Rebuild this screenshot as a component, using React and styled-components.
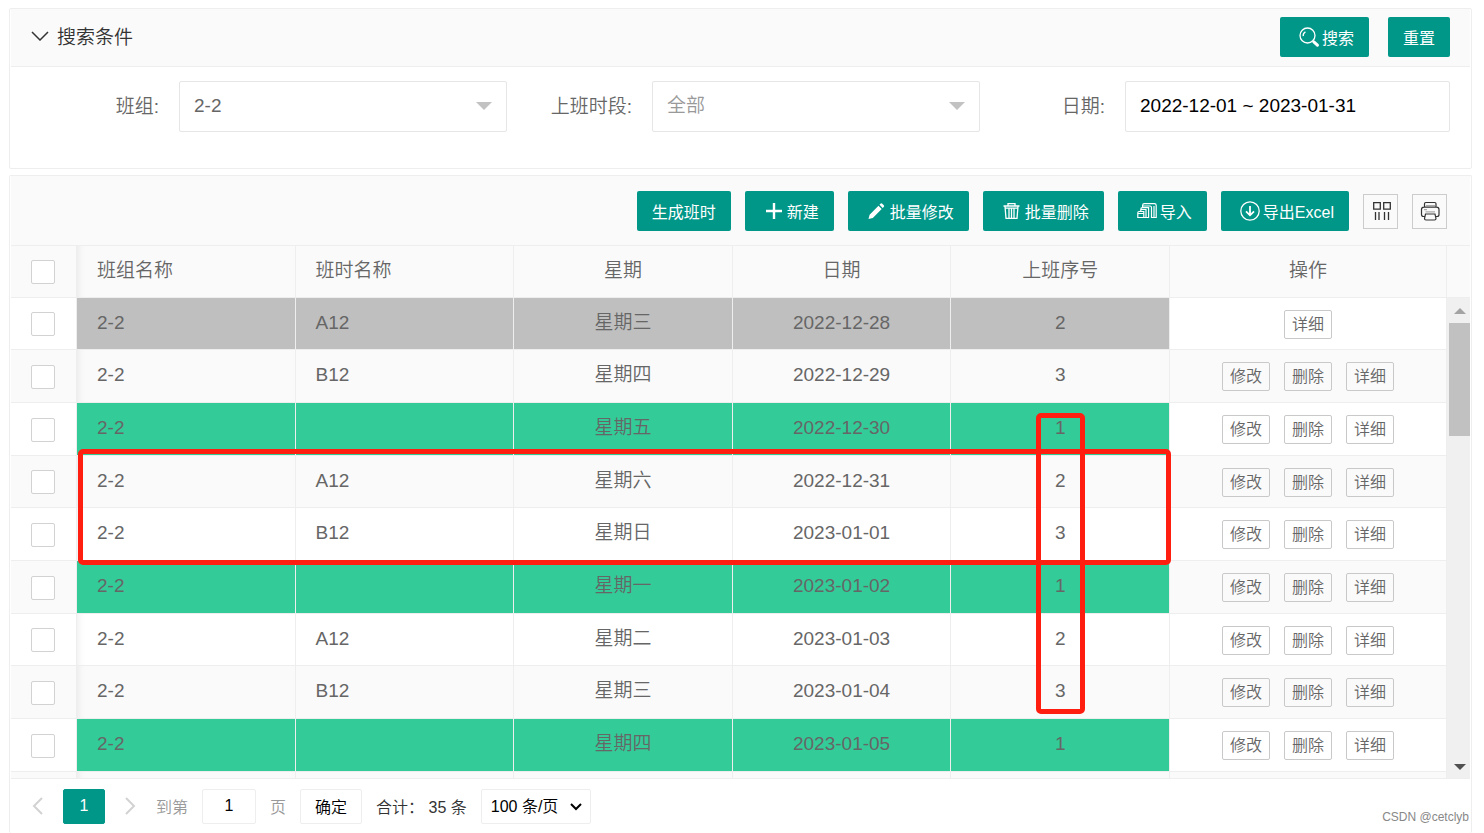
import React, {useState} from "react";
import styled, {createGlobalStyle, css} from "styled-components";

const colors = {
    primary: "#009688",
    border: "#eeeeee",
    inputBorder: "#e6e6e6",
    controlBorder: "#d2d2d2",
    panel: "#fafafa",
    text: "#666666",
    textDark: "#333333",
    textMuted: "#999999",
    past: "#bfbfbf",
    rest: "#33cc99",
    mark: "#ff1e10"
};

const GlobalStyle = createGlobalStyle`
    * {
        box-sizing: border-box;
    }

    body {
        margin: 0;

        background-color: #ffffff;
        color: ${colors.text};

        font-family: "Liberation Sans", "Noto Sans CJK SC", sans-serif;
        font-size: 19px;
        font-weight: 350;
    }

    button, input, select {
        margin: 0;

        font: inherit;
    }

    button {
        cursor: pointer;
    }
`;

const Page = styled.main`
    display: flex;
    flex-direction: column;
    gap: 6px;

    padding: 8px 12px 0 9px;

    min-height: 100vh;
    overflow: hidden;
`;

const Panel = styled.section`
    padding: 0 1px;

    border: 1px solid ${colors.border};
    border-radius: 2px;
`;

const ListPanel = styled(Panel)`
    display: flex;
    flex: 1;
    flex-direction: column;

    border-bottom: 0;
`;

const SearchHeader = styled.header`
    display: flex;
    align-items: center;
    justify-content: space-between;

    padding: 0 20px 2px;

    height: 58px;

    border-bottom: 1px solid ${colors.border};
    background-color: ${colors.panel};
`;

const Title = styled.h2`
    display: flex;
    align-items: center;
    gap: 8px;

    margin: 0 0 2px;

    color: ${colors.textDark};

    font-size: 19px;
    font-weight: 350;
`;

const ButtonGroup = styled.div`
    display: flex;
    align-items: center;
    gap: ${({gap}) => gap}px;
`;

const ActionButton = styled.button`
    display: flex;
    align-items: center;

    padding: 0 15px;

    height: 40px;

    border: 0;
    border-radius: 2px;

    background-color: ${colors.primary};
    color: #ffffff;

    font-size: 16px;
    font-weight: 400;
    white-space: nowrap;

    svg {
        margin: 0 3px 0 4px;
    }
`;

const SearchForm = styled.form`
    display: grid;
    grid-template-columns: 1fr 1fr 470px;

    padding: 14px 20px 36px 23px;
`;

const Field = styled.div`
    display: flex;
    align-items: center;
    gap: 20px;
`;

const FieldLabel = styled.label`
    flex: 0 0 125px;

    padding-bottom: 4px;

    text-align: right;
`;

const fieldBox = css`
    padding: 0 14px 2px;

    width: 100%;
    height: 51px;

    border: 1px solid ${colors.inputBorder};
    border-radius: 2px;
    outline: 0;

    background-color: #ffffff;
`;

const SelectWrapper = styled.div`
    position: relative;

    flex: 1;

    &::after {
        content: "";

        position: absolute;
        top: 21px;
        right: 15px;

        border: 8px solid transparent;
        border-top-color: #c2c2c2;
        border-bottom-width: 0;

        pointer-events: none;
    }
`;

const Select = styled.select`
    ${fieldBox}

    appearance: none;

    color: ${({isEmpty}) => (isEmpty ? colors.textMuted : colors.text)};
`;

const DateInput = styled.input`
    ${fieldBox}

    flex: 1;

    min-width: 0;

    color: #000000;
`;

const Toolbar = styled.div`
    display: flex;
    justify-content: flex-end;

    padding: 15px 23px 14px;

    border-bottom: 1px solid ${colors.border};
    background-color: ${colors.panel};
`;

const ToolButton = styled.button`
    display: flex;
    align-items: center;
    justify-content: center;

    padding: 0;

    width: 35px;
    height: 35px;

    border: 1px solid #cccccc;

    background-color: transparent;
    color: ${colors.textDark};
`;

const TableView = styled.div`
    display: flex;

    height: calc(100vh - 300px);
    overflow: hidden;

    border-bottom: 1px solid ${colors.border};
`;

const TableArea = styled.div`
    position: relative;

    flex: 1;
`;

const Table = styled.table`
    width: 100%;

    border-spacing: 0;
    table-layout: fixed;
`;

const Column = styled.col`
    width: ${({width}) => width};
`;

const Row = styled.tr`
    height: 53px;

    background-color: #ffffff;

    &:nth-child(even) {
        background-color: ${colors.panel};
    }

    &:nth-child(3n + 1) {
        height: 52px;
    }
`;

const HeaderRow = styled.tr`
    height: 52px;

    background-color: ${colors.panel};
`;

const rowColors = {
    past: colors.past,
    rest: colors.rest
};

const Cell = styled.td`
    padding: 0 20px 2px;

    border-right: 1px solid ${colors.border};
    border-bottom: 1px solid ${colors.border};

    background-color: ${({status}) => rowColors[status] || "transparent"};
    box-shadow: ${({isFirst, status}) => (isFirst && !status
        ? "inset 8px 0 8px -8px rgba(0, 0, 0, 0.1)"
        : "none")};

    font-weight: inherit;
    line-height: 22px;
    text-align: ${({align = "left"}) => align};
`;

const ControlCell = styled(Cell)`
    padding: 1px 20px 0;
`;

const Checkbox = styled.input`
    display: block;

    width: 24px;
    height: 24px;

    appearance: none;

    border: 1px solid ${colors.controlBorder};
    border-radius: 2px;

    background-color: ${({checked}) => (checked ? colors.primary : "#ffffff")};
`;

const RowActions = styled.div`
    display: flex;
    justify-content: center;
    gap: 14px;
`;

const RowButton = styled.button`
    padding: 0;

    width: 48px;
    height: 29px;

    border: 1px solid #c9c9c9;
    border-radius: 2px;

    background-color: transparent;
    color: ${colors.text};

    font-size: 16px;
    line-height: 27px;
`;

const Mark = styled.div`
    position: absolute;

    border: 5px solid ${colors.mark};
    border-radius: 5px;

    pointer-events: none;
`;

const RowsMark = styled(Mark)`
    top: 203px;
    right: 276px;
    left: 67px;

    height: 116px;
`;

const OrderMark = styled(Mark)`
    top: 167px;
    right: calc(277px + (100% - 343px) / 10 - 24px);

    width: 49px;
    height: 301px;
`;

const ScrollSide = styled.div`
    display: flex;
    flex: 0 0 23px;
    flex-direction: column;
`;

const ScrollHeader = styled.div`
    height: 52px;

    border-bottom: 1px solid ${colors.border};
    background-color: ${colors.panel};
`;

const ScrollTrack = styled.div`
    display: flex;
    flex: 1;
    flex-direction: column;
    align-items: center;

    padding: 10px 0 8px 2px;

    background-color: #f0f0f0;
`;

const ScrollArrow = styled.span`
    border: 6px solid transparent;
    border-top: ${({isDown}) => (isDown ? "6px solid #505050" : "0")};
    border-bottom: ${({isDown}) => (isDown ? "0" : "6px solid #a3a3a3")};
`;

const ScrollThumb = styled.div`
    margin: 9px 0 auto;

    width: 100%;
    height: 113px;

    background-color: #c1c1c1;
`;

const Footer = styled.footer`
    display: flex;
    flex: 1;
    align-items: center;
    gap: 14px;

    padding: 0 1px 0 20px;

    color: ${colors.textMuted};

    font-size: 16px;
    white-space: nowrap;
`;

const Pager = styled.nav`
    display: flex;
    align-items: center;
    gap: 18px;
`;

const PageArrow = styled.button`
    display: flex;

    padding: 0;

    border: 0;

    background-color: transparent;
    color: ${colors.controlBorder};
`;

const pagerBox = css`
    padding: 0;

    height: 35px;

    border: 1px solid ${colors.border};
    border-radius: 2px;

    background-color: #ffffff;
    color: #000000;
`;

const CurrentPage = styled.button`
    ${pagerBox}

    width: 42px;

    border-color: ${colors.primary};

    background-color: ${colors.primary};
    color: #ffffff;
`;

const PageJump = styled.label`
    display: flex;
    align-items: center;
    gap: 14px;

    margin-left: 5px;
`;

const PageInput = styled.input`
    ${pagerBox}

    width: 54px;

    text-align: center;
`;

const ConfirmButton = styled.button`
    ${pagerBox}

    width: 62px;
`;

const Total = styled.span`
    color: ${colors.textDark};
`;

const PageSize = styled.div`
    position: relative;

    color: #000000;

    svg {
        position: absolute;
        top: 13px;
        right: 8px;

        pointer-events: none;
    }
`;

const PageSizeSelect = styled.select`
    ${pagerBox}

    padding: 0 9px;

    width: 110px;

    appearance: none;
`;

const Watermark = styled.small`
    align-self: flex-end;

    margin: 0 0 9px auto;

    color: #888888;

    font-size: 12px;
    line-height: 14px;
`;

function Icon({children, size = 20, stroke = 1.3}) {
    return (
        <svg
            width={size}
            height={size}
            viewBox={`0 0 ${size} ${size}`}
            fill="none"
            stroke="currentColor"
            strokeWidth={stroke}
            aria-hidden="true">
            {children}
        </svg>);
}

function Chevron({width, height, points, stroke = 1.5}) {
    return (
        <svg width={width} height={height} fill="none" stroke="currentColor" strokeWidth={stroke} aria-hidden="true">
            <polyline points={points} />
        </svg>);
}

const SearchIcon = () => (
    <Icon>
        <circle cx="8.5" cy="8.5" r="7.5" />
        <path d="M4.2 9.1a4.4 4.4 0 0 1 2.2-4.2" />
        <path d="M14.8 14.8l3.6 3.4" strokeWidth="3" strokeLinecap="round" />
    </Icon>);

const AddIcon = () => (
    <Icon stroke={2.4}>
        <path d="M10 2v16M2 10h16" />
    </Icon>);

const EditIcon = () => (
    <Icon>
        <path d="M1.500 18l1.100-4.300L11.500 4.800l3.200 3.200-8.900 8.900zM12.500 3.800l1.200-1.200q.8-.6 1.600.1l1.500 1.500q.7.8.1 1.600l-1.200 1.200z" fill="currentColor" stroke="none" />
    </Icon>);

const DeleteIcon = () => (
    <Icon>
        <path d="M1.500 5h16M6 4.600V2.600h7v2M3 7.200h13M3 5.200l1 12.200h11l1-12.200M7 7.500v9.500M9.500 7.500v9.500M12 7.500v9.500" />
    </Icon>);

const ImportIcon = () => (
    <Icon stroke={1.200}>
        <path d="M.8 16.500v-4.700q0-1.300 1.300-1.300h4.700v6zM3.800 10.500V8.500q0-1.800 1.800-1.800h6v9.800H6.800M.8 12.500h6M3.800 8.500h5.200v8M5.600 6.700V4.500q0-1.800 1.800-1.800h10q1.800 0 1.800 1.800v12h-4.700V6.500q0-1.500-1.500-1.500H6M17 5v11.500" />
    </Icon>);

const ExportIcon = () => (
    <Icon>
        <circle cx="10" cy="10" r="9.200" />
        <path d="M10 5v9M6 10.300l4 4 4-4" strokeWidth="1.800" />
    </Icon>);

const ColumnsIcon = () => (
    <Icon stroke={1.300}>
        <path d="M2.700 1.600h6.600v6.600h-6.600zM12.700 1.600h6.600v6.600h-6.600zM4.500 11v8M8 11v8M13.500 11v8M17.500 11v8" />
    </Icon>);

const PrintIcon = () => (
    <Icon stroke={1.200}>
        <path d="M4.500 6V2.800Q4.500 1.500 5.800 1.500h8.900q1.300 0 1.300 1.300V6M4.500 15.500H3.500Q1.500 15.500 1.500 13.500V8.500Q1.500 6.200 4 6.200h12.500Q19 6.200 19 8.500V13.500q0 2-2 2h-1M5.500 13h9.500l1 4.500q0 1.500-1.500 1.500H6Q4.500 19 4.500 17.500z" />
        <path d="M5.500 10.800h9.500M4 8.600h3M6 4.500h9" stroke="#aaaaaa" />
    </Icon>);

const rows = [
    {name: "2-2", shift: "A12", weekday: "星期三", date: "2022-12-28", order: 2, status: "past"},
    {name: "2-2", shift: "B12", weekday: "星期四", date: "2022-12-29", order: 3},
    {name: "2-2", shift: "", weekday: "星期五", date: "2022-12-30", order: 1, status: "rest"},
    {name: "2-2", shift: "A12", weekday: "星期六", date: "2022-12-31", order: 2},
    {name: "2-2", shift: "B12", weekday: "星期日", date: "2023-01-01", order: 3},
    {name: "2-2", shift: "", weekday: "星期一", date: "2023-01-02", order: 1, status: "rest"},
    {name: "2-2", shift: "A12", weekday: "星期二", date: "2023-01-03", order: 2},
    {name: "2-2", shift: "B12", weekday: "星期三", date: "2023-01-04", order: 3},
    {name: "2-2", shift: "", weekday: "星期四", date: "2023-01-05", order: 1, status: "rest"}
];

function SearchPanel() {
    const [group, setGroup] = useState("2-2");
    const [period, setPeriod] = useState("");
    const [range, setRange] = useState("2022-12-01 ~ 2023-01-31");

    return (
        <Panel>
            <SearchHeader>
                <Title>
                    <Chevron width={18} height={10} points="1,1 9,9 17,1" />
                    搜索条件
                </Title>
                <ButtonGroup gap={19}>
                    <ActionButton type="submit" form="search"><SearchIcon />搜索</ActionButton>
                    <ActionButton type="reset" form="search">重置</ActionButton>
                </ButtonGroup>
            </SearchHeader>
            <SearchForm id="search" onSubmit={(event) => event.preventDefault()}>
                <Field>
                    <FieldLabel htmlFor="group">班组:</FieldLabel>
                    <SelectWrapper>
                        <Select id="group" value={group} onChange={(event) => setGroup(event.target.value)}>
                            <option value="2-2">2-2</option>
                        </Select>
                    </SelectWrapper>
                </Field>
                <Field>
                    <FieldLabel htmlFor="period">上班时段:</FieldLabel>
                    <SelectWrapper>
                        <Select
                            id="period"
                            isEmpty={period === ""}
                            value={period}
                            onChange={(event) => setPeriod(event.target.value)}>
                            <option value="">全部</option>
                        </Select>
                    </SelectWrapper>
                </Field>
                <Field>
                    <FieldLabel htmlFor="range">日期:</FieldLabel>
                    <DateInput id="range" value={range} onChange={(event) => setRange(event.target.value)} />
                </Field>
            </SearchForm>
        </Panel>);
}

function ListToolbar() {
    return (
        <Toolbar>
            <ButtonGroup gap={14}>
                <ActionButton>生成班时</ActionButton>
                <ActionButton><AddIcon />新建</ActionButton>
                <ActionButton><EditIcon />批量修改</ActionButton>
                <ActionButton><DeleteIcon />批量删除</ActionButton>
                <ActionButton><ImportIcon />导入</ActionButton>
                <ActionButton><ExportIcon />导出Excel</ActionButton>
                <ToolButton aria-label="筛选列"><ColumnsIcon /></ToolButton>
                <ToolButton aria-label="打印"><PrintIcon /></ToolButton>
            </ButtonGroup>
        </Toolbar>);
}

function ShiftRow({
    name, shift, weekday, date, order, status, isChecked, onCheck
}) {
    return (
        <Row>
            <ControlCell>
                <Checkbox type="checkbox" aria-label={date} checked={isChecked} onChange={onCheck} />
            </ControlCell>
            <Cell isFirst status={status}>{name}</Cell>
            <Cell status={status}>{shift}</Cell>
            <Cell status={status} align="center">{weekday}</Cell>
            <Cell status={status} align="center">{date}</Cell>
            <Cell status={status} align="center">{order}</Cell>
            <ControlCell align="center">
                <RowActions>
                    {status !== "past" && <RowButton>修改</RowButton>}
                    {status !== "past" && <RowButton>删除</RowButton>}
                    <RowButton>详细</RowButton>
                </RowActions>
            </ControlCell>
        </Row>);
}

function ShiftTable() {
    const [checked, setChecked] = useState([]);
    const isAllChecked = checked.length === rows.length;

    const toggle = (date) => setChecked(checked.includes(date)
        ? checked.filter((item) => item !== date)
        : [...checked, date]);

    return (
        <TableView>
            <TableArea>
                <Table>
                    <colgroup>
                        <Column width="66px" />
                        <Column />
                        <Column />
                        <Column />
                        <Column />
                        <Column />
                        <Column width="277px" />
                    </colgroup>
                    <thead>
                        <HeaderRow>
                            <ControlCell as="th">
                                <Checkbox
                                    type="checkbox"
                                    aria-label="全选"
                                    checked={isAllChecked}
                                    onChange={() => setChecked(isAllChecked ? [] : rows.map(({date}) => date))} />
                            </ControlCell>
                            <Cell as="th" isFirst>班组名称</Cell>
                            <Cell as="th">班时名称</Cell>
                            <Cell as="th" align="center">星期</Cell>
                            <Cell as="th" align="center">日期</Cell>
                            <Cell as="th" align="center">上班序号</Cell>
                            <Cell as="th" align="center">操作</Cell>
                        </HeaderRow>
                    </thead>
                    <tbody>
                        {rows.map((row) => (
                            <ShiftRow
                                key={row.date}
                                {...row}
                                isChecked={checked.includes(row.date)}
                                onCheck={() => toggle(row.date)} />
                        ))}
                        <Row>
                            <Cell />
                            <Cell isFirst />
                            <Cell />
                            <Cell />
                            <Cell />
                            <Cell />
                            <Cell />
                        </Row>
                    </tbody>
                </Table>
                <RowsMark />
                <OrderMark />
            </TableArea>
            <ScrollSide>
                <ScrollHeader />
                <ScrollTrack>
                    <ScrollArrow />
                    <ScrollThumb />
                    <ScrollArrow isDown />
                </ScrollTrack>
            </ScrollSide>
        </TableView>);
}

function Pagination() {
    const [page, setPage] = useState("1");

    return (
        <Footer>
            <Pager>
                <PageArrow aria-label="上一页">
                    <Chevron width={14} height={18} points="11,1 3,9 11,17" stroke={2} />
                </PageArrow>
                <CurrentPage>1</CurrentPage>
                <PageArrow aria-label="下一页">
                    <Chevron width={14} height={18} points="3,1 11,9 3,17" stroke={2} />
                </PageArrow>
            </Pager>
            <PageJump>
                到第
                <PageInput value={page} onChange={(event) => setPage(event.target.value)} />
                页
            </PageJump>
            <ConfirmButton>确定</ConfirmButton>
            <Total>合计： 35 条</Total>
            <PageSize>
                <PageSizeSelect aria-label="每页条数" defaultValue="100">
                    <option value="100">100 条/页</option>
                </PageSizeSelect>
                <Chevron width={14} height={10} points="2,2 7,7 12,2" stroke={2} />
            </PageSize>
            <Watermark>CSDN @cetclyb</Watermark>
        </Footer>);
}

function App() {
    return (
        <>
            <GlobalStyle />
            <Page>
                <SearchPanel />
                <ListPanel>
                    <ListToolbar />
                    <ShiftTable />
                    <Pagination />
                </ListPanel>
            </Page>
        </>);
}

export default App;
